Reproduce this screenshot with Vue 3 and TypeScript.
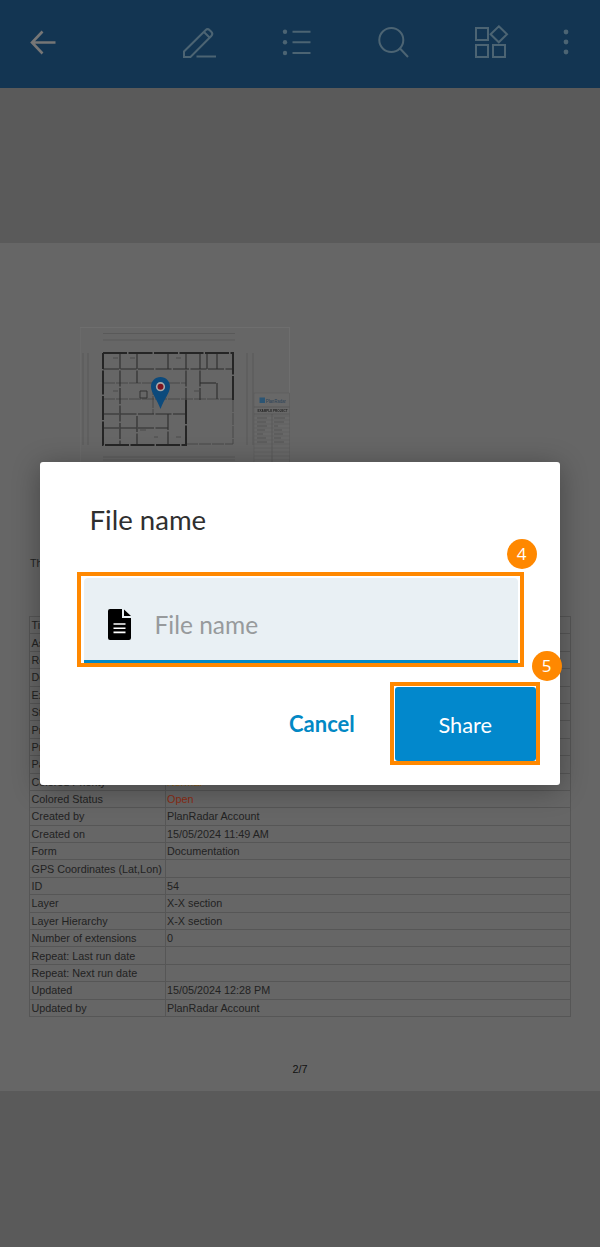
<script setup lang="ts">
interface Row { label: string; value: string; tone?: string }
const rows: Row[] = [
  { label: 'Title', value: 'Example ticket' },
  { label: 'Assignee', value: 'PlanRadar Account' },
  { label: 'Responsible', value: 'PlanRadar Account' },
  { label: 'Description', value: '' },
  { label: 'Expiration date', value: '' },
  { label: 'Status', value: 'Open' },
  { label: 'Priority', value: 'Normal' },
  { label: 'Progress', value: '0' },
  { label: 'Parent', value: '' },
  { label: 'Colored Priority', value: 'Normal', tone: 'warm' },
  { label: 'Colored Status', value: 'Open', tone: 'red' },
  { label: 'Created by', value: 'PlanRadar Account' },
  { label: 'Created on', value: '15/05/2024 11:49 AM' },
  { label: 'Form', value: 'Documentation' },
  { label: 'GPS Coordinates (Lat,Lon)', value: '' },
  { label: 'ID', value: '54' },
  { label: 'Layer', value: 'X-X section' },
  { label: 'Layer Hierarchy', value: 'X-X section' },
  { label: 'Number of extensions', value: '0' },
  { label: 'Repeat: Last run date', value: '' },
  { label: 'Repeat: Next run date', value: '' },
  { label: 'Updated', value: '15/05/2024 12:28 PM' },
  { label: 'Updated by', value: 'PlanRadar Account' },
]
const outerWalls = 'M103 353H233V400M186 400V445H103V353'
const innerWalls = [
  'M120 353V445', 'M137 353V383', 'M137 416V445', 'M168 353V369', 'M168 414V445', 'M186 353V400',
  'M200 353V400', 'M207 353V369', 'M217 353V369', 'M103 369H233', 'M103 414H186', 'M103 428H168',
  'M200 383H217', 'M217 383V400',
]
const lightWalls = ['M103 383H186', 'M103 399H233', 'M153 383V414', 'M186 444H233', 'M233 400V444']
const titleRows = [416, 420, 424, 428, 432, 436, 440, 444, 448, 452, 456, 460]
</script>

<template>
  <div class="screen">
    <header class="toolbar">
      <svg class="icon back" viewBox="0 0 40 40"><path d="M32.5 20.5H9M19.5 9.5 9 20.5l10.5 11" class="arrow" /></svg>
      <svg class="icon edit" viewBox="0 0 40 40"><path d="M4 35v-5.5L25.5 8.2a3 3 0 0 1 4.2 0l1.6 1.6a3 3 0 0 1 0 4.2L10.5 35zM24 10l6 6M16.5 34.5H36" class="line" /></svg>
      <svg class="icon" viewBox="0 0 40 40">
        <path d="M15.5 9.7h18M15.5 20.3h18M15.5 31h18" class="line" />
        <circle cx="8" cy="9.7" r="2.2" class="dot" /><circle cx="8" cy="20.3" r="2.2" class="dot" /><circle cx="8" cy="31" r="2.2" class="dot" />
      </svg>
      <svg class="icon" viewBox="0 0 40 40"><circle cx="17.3" cy="18" r="12" class="line" /><path d="M25.8 26.3 34 35" class="line" /></svg>
      <svg class="icon" viewBox="0 0 40 40">
        <path d="M5 6h12v12H5zM5 23h12v12H5zM22 23h12v12H22zM27.8 4.3l8.2 8-8.2 8-8.2-8z" class="line" />
      </svg>
      <svg class="icon more" viewBox="0 0 40 40">
        <circle cx="20" cy="10" r="2.4" class="dot" /><circle cx="20" cy="20" r="2.4" class="dot" /><circle cx="20" cy="30" r="2.4" class="dot" />
      </svg>
    </header>

    <div class="band top-band"></div>

    <main class="page">
      <div class="sheet">
        <svg class="plan" viewBox="80 327 210 150">
          <rect x="80" y="327.5" width="209.5" height="149" fill="none" stroke="#6e6e6e" />
          <g stroke="#4c4c4c" stroke-width=".5" fill="none">
            <path d="M103 333.5h132M103 340h132M103 457h132M103 460h132M83 353v92M88 353v92M247 353v92M253 353v92" />
          </g>
          <g stroke="#3e3e3e" stroke-width=".7" fill="none" stroke-dasharray="12 1">
            <path v-for="d in lightWalls" :key="d" :d="d" />
          </g>
          <g stroke="#2c2c2c" stroke-width="1.1" fill="none" stroke-dasharray="16 1.5">
            <path v-for="d in innerWalls" :key="d" :d="d" />
          </g>
          <path :d="outerWalls" fill="none" stroke="#252525" stroke-width="2" stroke-dasharray="24 1.5" />
          <path d="M140 391h7v7h-7z" fill="none" stroke="#333" stroke-width="1" />
          <path d="M113 358h5M130 358h5M176 358h5M113 391h5M194 391h7M140 430h6M176 437h5M154 437h4" stroke="#4a4a4a" stroke-width="1" />
          <rect x="254" y="393" width="35.5" height="70" fill="#686868" stroke="#575757" stroke-width=".5" />
          <rect x="259.5" y="397.5" width="5.5" height="5.5" fill="#2b5574" />
          <text x="266" y="402.5" textLength="20" lengthAdjust="spacingAndGlyphs" class="plan-logo">PlanRadar</text>
          <path d="M254 407h35.5M254 414h35.5M272 414v48" stroke="#4b4b4b" stroke-width=".5" />
          <text x="257.5" y="411.8" textLength="30" lengthAdjust="spacingAndGlyphs" class="plan-title">EXAMPLE PROJECT</text>
          <path v-for="y in titleRows" :key="y" :d="`M254 ${y}h35.5`" stroke="#575757" stroke-width=".4" />
          <path d="M257 418h10M257 422h9M257 426h10M257 430h8M257 434h6M257 438h9M257 442h10M274 418h11M274 422h10M274 426h4M274 430h8M274 434h9M274 438h7M274 442h10" stroke="#4a4a4a" stroke-width=".7" />
          <path d="M160.5 377c-5.3 0-9.5 4.2-9.5 9.5 0 6.4 6.4 13.5 9.5 22.5 3.1-9 9.5-16.1 9.5-22.5 0-5.3-4.2-9.5-9.5-9.5z" fill="#0c4a7c" />
          <circle cx="160.5" cy="386.7" r="4.6" fill="#a9a9a9" />
          <circle cx="160.5" cy="386.7" r="3" fill="#7d1420" />
        </svg>
      </div>
      <p class="intro">This document has been generated automatically from the ticket details.</p>
      <table class="details">
        <tbody>
          <tr v-for="(row, i) in rows" :key="i">
            <td class="key">{{ row.label }}</td>
            <td :class="row.tone">{{ row.value }}</td>
          </tr>
        </tbody>
      </table>
      <div class="pager">2/7</div>
    </main>

    <div class="band bottom-band"></div>

    <section class="dialog">
      <h2 class="title">File name</h2>
      <div class="callout field-callout">
        <label class="field">
          <svg class="doc" viewBox="0 0 23 31">
            <path d="M2 0h12v9h9v20a2 2 0 0 1-2 2H2a2 2 0 0 1-2-2V2a2 2 0 0 1 2-2z" fill="#000" />
            <path d="M16 .5 23 7h-7z" fill="#000" />
            <path d="M5.5 15h12M5.5 19.2h12M5.5 23.4h12" stroke="#fff" stroke-width="1.6" />
          </svg>
          <span class="placeholder">File name</span>
        </label>
        <span class="badge badge-four">4</span>
      </div>
      <div class="actions">
        <button class="cancel" type="button">Cancel</button>
        <div class="callout share-callout">
          <button class="share" type="button">Share</button>
          <span class="badge badge-five">5</span>
        </div>
      </div>
    </section>
  </div>
</template>

<style scoped>
.screen {
  position: relative;
  width: 600px;
  height: 1247px;
  overflow: hidden;
  display: flex;
  flex-direction: column;
  background: #5a5a5a;
  font-family: "Liberation Sans", Arial, sans-serif;
}
.toolbar {
  flex: 0 0 88px;
  box-sizing: border-box;
  display: flex;
  align-items: flex-start;
  padding: 22px 14px 0 23px;
  gap: 57px;
  background: #133552;
}
.icon { width: 40px; height: 40px; flex: none; }
.edit { margin-left: 59.5px; }
.more { margin-left: -21.5px; }
.line { fill: none; stroke: #4c6473; stroke-width: 2; }
.arrow { fill: none; stroke: #767676; stroke-width: 2.6; }
.dot { fill: #4c6473; }
.band { background: #5a5a5a; }
.top-band { flex: 0 0 155px; }
.bottom-band { flex: 1; }
.page {
  flex: 0 0 848px;
  box-sizing: border-box;
  display: flex;
  flex-direction: column;
  padding-top: 84px;
  background: #666;
  color: #222;
  font-size: 10.8px;
}
.sheet { height: 150px; padding-left: 80px; }
.plan { display: block; width: 210px; height: 150px; filter: blur(.5px); }
.plan-logo { font-size: 5.2px; fill: #2b4258; font-family: "Liberation Sans", sans-serif; }
.plan-title { font-size: 3.4px; font-weight: 700; fill: #222; font-family: "Liberation Sans", sans-serif; }
.intro { margin: 79px 0 0 30px; line-height: 14px; white-space: nowrap; }
.details {
  margin: 46px 0 0 29px;
  width: 542px;
  table-layout: fixed;
  border-collapse: collapse;
  border: 1px solid #565656;
}
.details td {
  box-sizing: border-box;
  height: 17.4px;
  padding: 0 0 0 1.5px;
  border: 1px solid #565656;
  line-height: 14px;
  white-space: nowrap;
  overflow: hidden;
}
.details .key { width: 135.5px; }
.details .red { color: #8a2c14; }
.details .warm { color: #8a5a14; }
.pager { margin-top: 45.5px; text-align: center; line-height: 14px; color: #111; }
.dialog {
  position: absolute;
  left: 40px;
  top: 462px;
  width: 520px;
  height: 323px;
  box-sizing: border-box;
  padding: 40px 20px 0 37px;
  background: #fff;
  border-radius: 3px;
  box-shadow: 0 4px 28px rgba(0, 0, 0, .32);
  font-family: Lato, "Liberation Sans", sans-serif;
}
.title {
  margin: 0 0 0 12.5px;
  height: 70px;
  font-size: 27.6px;
  line-height: 36px;
  font-weight: 400;
  color: #2f2f2f;
}
.callout { position: relative; box-sizing: border-box; border: 4.2px solid #ff8800; background: #fff; }
.field-callout { width: 447px; height: 95px; padding: 2px 2.5px 0 2.5px; }
.field {
  box-sizing: border-box;
  height: 84.8px;
  display: flex;
  align-items: center;
  gap: 24px;
  padding-left: 24px;
  padding-top: 12px;
  background: #e9f0f4;
  border-bottom: 3.6px solid #0288c4;
  border-radius: 4px 4px 0 0;
}
.doc { width: 23px; height: 31px; flex: none; }
.placeholder { font-size: 24.5px; color: #979a9c; }
.actions {
  display: flex;
  align-items: flex-start;
  margin-top: 15px;
  margin-left: 212px;
}
.cancel {
  margin: 25px 0 0 0;
  padding: 0;
  border: 0;
  background: none;
  width: 101px;
  text-align: left;
  font: 700 22px/34px Lato, sans-serif;
  color: #0288c4;
}
.share-callout { width: 150px; height: 83px; padding: 0.5px 1px; }
.share {
  display: block;
  width: 140.6px;
  height: 74px;
  padding: 0;
  border: 0;
  border-radius: 3px;
  background: #0288cc;
  color: #fff;
  font: 400 21.8px/75px Lato, sans-serif;
}
.badge {
  position: absolute;
  width: 30px;
  height: 30px;
  border-radius: 50%;
  background: #ff8800;
  color: #fff;
  font: 400 17px/30px "Open Sans", sans-serif;
  text-align: center;
}
.badge-four { right: -16.5px; top: -37px; }
.badge-five { right: -25.5px; top: -35px; }
</style>
